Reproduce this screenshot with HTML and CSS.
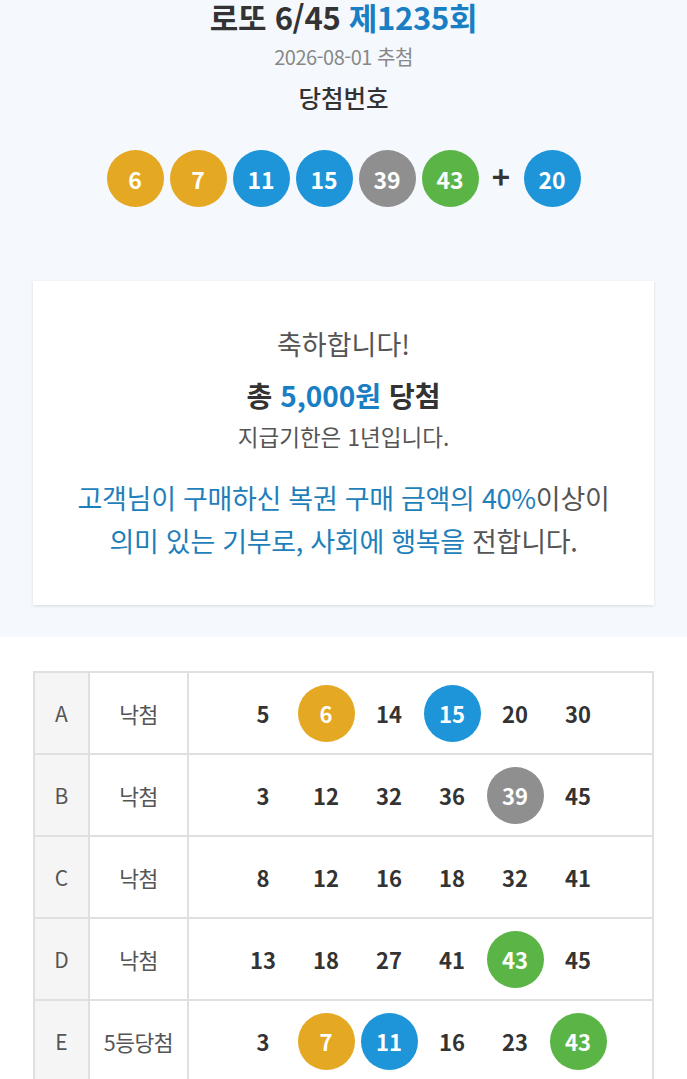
FILE: index.html
```html
<!DOCTYPE html>
<html lang="ko">
<head>
<meta charset="utf-8">
<title>로또 6/45 제1235회</title>
<link rel="stylesheet" href="styles.css">
</head>
<body>
<section class="top">
  <h1 class="title">로또 6/45 <span class="blue">제1235회</span></h1>
  <div class="date">2026-08-01 추첨</div>
  <div class="label">당첨번호</div>
  <div class="balls">
    <span class="ball y">6</span>
    <span class="ball y">7</span>
    <span class="ball b">11</span>
    <span class="ball b">15</span>
    <span class="ball g">39</span>
    <span class="ball gr">43</span>
    <span class="plus">+</span>
    <span class="ball b">20</span>
  </div>
  <div class="card">
    <div class="congrats">축하합니다!</div>
    <div class="prize">총 <span class="blue">5,000원</span> 당첨</div>
    <div class="due">지급기한은 1년입니다.</div>
    <p class="msg"><span class="blue2">고객님이 구매하신 복권 구매 금액의 40%</span>이상이<br><span class="blue2">의미 있는 기부로, 사회에 행복을</span> 전합니다.</p>
  </div>
</section>
<section class="bottom">
  <table class="games">
    <tr>
      <td class="c1">A</td><td class="c2">낙첨</td>
      <td class="c3"><div class="nums"><span class="n">5</span><span class="n ball y">6</span><span class="n">14</span><span class="n ball b">15</span><span class="n">20</span><span class="n">30</span></div></td>
    </tr>
    <tr>
      <td class="c1">B</td><td class="c2">낙첨</td>
      <td class="c3"><div class="nums"><span class="n">3</span><span class="n">12</span><span class="n">32</span><span class="n">36</span><span class="n ball g">39</span><span class="n">45</span></div></td>
    </tr>
    <tr>
      <td class="c1">C</td><td class="c2">낙첨</td>
      <td class="c3"><div class="nums"><span class="n">8</span><span class="n">12</span><span class="n">16</span><span class="n">18</span><span class="n">32</span><span class="n">41</span></div></td>
    </tr>
    <tr>
      <td class="c1">D</td><td class="c2">낙첨</td>
      <td class="c3"><div class="nums"><span class="n">13</span><span class="n">18</span><span class="n">27</span><span class="n">41</span><span class="n ball gr">43</span><span class="n">45</span></div></td>
    </tr>
    <tr>
      <td class="c1">E</td><td class="c2">5등당첨</td>
      <td class="c3"><div class="nums"><span class="n">3</span><span class="n ball y">7</span><span class="n ball b">11</span><span class="n">16</span><span class="n">23</span><span class="n ball gr">43</span></div></td>
    </tr>
  </table>
</section>
</body>
</html>
```

FILE: styles.css
```css
* { box-sizing: border-box; }
html, body { margin: 0; padding: 0; }
body {
  font-family: "Noto Sans CJK KR", "Noto Sans", sans-serif;
  color: #333;
  background: #fff;
}
.top {
  background: #f5f9fd;
  padding: 0 33px 32px;
  display: flex;
  flex-direction: column;
  align-items: center;
}
.title {
  margin: 0;
  font-size: 31px;
  font-weight: 700;
  line-height: 34px;
  color: #333;
  letter-spacing: -0.3px;
}
.blue { color: #1a7ec4; }
.date {
  margin-top: 10px;
  font-size: 20px;
  line-height: 26px;
  color: #888;
  letter-spacing: -0.5px;
}
.label {
  margin-top: 13px;
  font-size: 24.5px;
  line-height: 30px;
  font-weight: 500;
  color: #333;
}
.balls {
  margin-top: 37px;
  display: flex;
  align-items: center;
  gap: 6px;
}
.ball {
  width: 57px;
  height: 57px;
  border-radius: 50%;
  display: flex;
  align-items: center;
  justify-content: center;
  color: #fff;
  font-weight: 700;
  font-size: 23px;
}
.ball.y { background: #e5a823; }
.ball.b { background: #1e94d9; }
.ball.g { background: #8f8f8f; }
.ball.gr { background: #5ab546; }
.plus {
  width: 33px;
  text-align: center;
  font-size: 31px;
  font-weight: 700;
  color: #333;
  line-height: 30px;
  margin-top: -6px;
}
.card {
  align-self: stretch;
  margin-top: 74px;
  background: #fff;
  box-shadow: 0 1px 3px rgba(0,0,0,0.12);
  padding: 45px 10px 43px;
  text-align: center;
}
.congrats {
  font-size: 27px;
  line-height: 36px;
  color: #555;
}
.prize {
  margin-top: 15px;
  font-size: 28px;
  line-height: 36px;
  font-weight: 700;
  color: #333;
}
.due {
  margin-top: 8px;
  font-size: 22.5px;
  line-height: 30px;
  color: #555;
}
.msg {
  margin: 25px 0 0;
  font-size: 27px;
  line-height: 43px;
  color: #555;
  letter-spacing: -0.3px;
  white-space: nowrap;
}
.blue2 { color: #1f7fba; }
.bottom {
  padding: 34px 33px 0;
}
.games {
  width: 100%;
  border-collapse: collapse;
  table-layout: fixed;
}
.games td {
  border: 2px solid #e0e0e0;
  height: 82px;
  text-align: center;
  vertical-align: middle;
  padding: 0;
}
.c1 {
  width: 55px;
  background: #f5f5f5;
  font-size: 21px;
  color: #555;
}
.c2 {
  width: 99px;
  font-size: 21.5px;
  color: #555;
  letter-spacing: -0.5px;
}
.nums {
  display: flex;
  justify-content: center;
  gap: 6px;
}
.n {
  width: 57px;
  height: 57px;
  display: flex;
  align-items: center;
  justify-content: center;
  font-size: 22px;
  font-weight: 700;
  color: #333;
}
.n.ball { color: #fff; }
```
